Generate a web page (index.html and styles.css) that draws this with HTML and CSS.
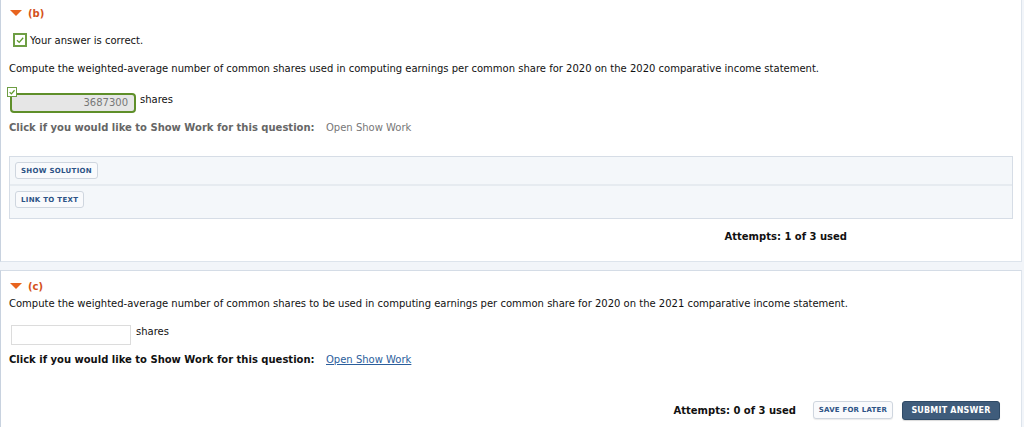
FILE: index.html
```html
<!DOCTYPE html>
<html>
<head>
<meta charset="utf-8">
<link rel="stylesheet" href="styles.css">
</head>
<body>
<div class="page">
  <section class="panel panel-b">
    <div class="part-head"><span class="tri"></span><span class="part-label">(b)</span></div>
    <div class="correct">
      <span class="chk"><svg width="10" height="10" viewBox="0 0 10 10"><path d="M2 5.2 L4.2 7.4 L8.2 2.8" fill="none" stroke="#5e9a2c" stroke-width="1.3"/></svg></span>
      <span>Your answer is correct.</span>
    </div>
    <p class="question">Compute the weighted-average number of common shares used in computing earnings per common share for 2020 on the 2020 comparative income statement.</p>
    <div class="answer-row done-row">
      <span class="input-wrap">
        <span class="input done">3687300</span>
        <span class="mini-chk"><svg width="8" height="8" viewBox="0 0 10 10"><path d="M2 5.2 L4.2 7.4 L8.2 2.8" fill="none" stroke="#5e9a2c" stroke-width="1.6"/></svg></span>
      </span>
      <span class="unit">shares</span>
    </div>
    <div class="showwork muted"><span class="sw-label">Click if you would like to Show Work for this question:</span><span class="sw-link">Open Show Work</span></div>
    <div class="solution">
      <div class="sol-row"><span class="btn">SHOW SOLUTION</span></div>
      <div class="sol-row"><span class="btn">LINK TO TEXT</span></div>
    </div>
    <div class="attempts-row first"><span class="attempts">Attempts: 1 of 3 used</span></div>
  </section>

  <section class="panel panel-c">
    <div class="part-head"><span class="tri"></span><span class="part-label">(c)</span></div>
    <p class="question q2">Compute the weighted-average number of common shares to be used in computing earnings per common share for 2020 on the 2021 comparative income statement.</p>
    <div class="answer-row empty-row">
      <span class="input empty"></span>
      <span class="unit">shares</span>
    </div>
    <div class="showwork active"><span class="sw-label">Click if you would like to Show Work for this question:</span><span class="sw-link link">Open Show Work</span></div>
    <div class="attempts-row second">
      <span class="attempts">Attempts: 0 of 3 used</span>
      <span class="btn save">SAVE FOR LATER</span>
      <span class="btn submit">SUBMIT ANSWER</span>
    </div>
  </section>
</div>
</body>
</html>
```
FILE: styles.css
```css
html, body {
  margin: 0;
  padding: 0;
}
body {
  background: #f2f5f9;
  font-family: "DejaVu Sans", Verdana, sans-serif;
  font-size: 10px;
  color: #111;
  width: 1024px;
  height: 427px;
  overflow: hidden;
}
.page {
  display: flex;
  flex-direction: column;
  gap: 8px;
}
.panel {
  background: #fff;
  border-left: 1px solid #c8d2df;
  border-right: 1px solid #dde4ec;
  box-sizing: content-box;
}
.panel-b {
  height: 261px;
  border-bottom: 1px solid #dde4ec;
  padding: 0 0 0 8px;
  width: 1012px;
  display: flex;
  flex-direction: column;
}
.panel-c {
  border-top: 1px solid #d4dce6;
  padding: 0 0 0 8px;
  width: 1012px;
  height: 160px;
  display: flex;
  flex-direction: column;
}
.part-head {
  display: flex;
  align-items: center;
  height: 12px;
  margin-top: 7px;
  padding-left: 1px;
}
.panel-c .part-head {
  margin-top: 9px;
}
.tri {
  width: 0;
  height: 0;
  border-left: 6px solid transparent;
  border-right: 6px solid transparent;
  border-top: 6px solid #e8641f;
  margin-right: 6px;
}
.part-label {
  color: #d4521a;
  font-weight: bold;
  font-size: 10px;
}
.correct {
  display: flex;
  align-items: center;
  margin-top: 14px;
  margin-left: 4px;
  height: 14px;
  gap: 3px;
}
.chk {
  width: 10px;
  height: 10px;
  border: 2px solid #6e9e44;
  display: flex;
  align-items: center;
  justify-content: center;
  background: #fff;
}
.question {
  margin: 16px 0 0 0;
  line-height: 12px;
}
.q2 {
  margin-top: 6px;
}
.answer-row {
  display: flex;
  align-items: center;
}
.done-row {
  margin-top: 12px;
  height: 28px;
  align-items: flex-start;
}
.input-wrap {
  position: relative;
  padding: 6px 0 0 6px;
  margin-left: -5px;
}
.input {
  display: block;
  box-sizing: border-box;
}
.input.done {
  width: 126px;
  height: 20px;
  border: 2px solid #5f8f2a;
  border-radius: 4px;
  background: #e6e6e6;
  color: #777;
  text-align: right;
  line-height: 16px;
  padding-right: 6px;
}
.mini-chk {
  position: absolute;
  left: 3px;
  top: 0;
  width: 10px;
  height: 10px;
  box-sizing: border-box;
  border: 1px solid #6e9e44;
  background: #fff;
  display: flex;
  align-items: center;
  justify-content: center;
}
.unit {
  margin-left: 4px;
}
.done-row .unit {
  margin-top: 7px;
}
.empty-row {
  margin-top: 15px;
  margin-left: 2px;
  align-items: flex-start;
}
.input.empty {
  width: 120px;
  height: 20px;
  border: 1px solid #dcdcdc;
  background: #fff;
}
.empty-row .unit {
  margin-left: 5px;
  margin-top: 1px;
}
.showwork {
  display: flex;
  margin-top: 7px;
  font-size: 10px;
}
.showwork.active {
  margin-top: 9px;
}
.sw-label {
  font-weight: bold;
  width: 317px;
}
.muted .sw-label {
  color: #666;
}
.muted .sw-link {
  color: #777;
}
.sw-link.link {
  color: #2b5e9c;
  text-decoration: underline;
}
.solution {
  margin-top: 23px;
  width: 1002px;
  border: 1px solid #d6dde6;
  background: #f4f7fa;
  display: flex;
  flex-direction: column;
}
.sol-row {
  height: 27px;
  padding: 5px 0 0 5px;
  box-sizing: border-box;
}
.sol-row + .sol-row {
  border-top: 2px solid #e6ebf0;
  height: 34px;
}
.btn {
  display: inline-flex;
  align-items: center;
  justify-content: center;
  box-sizing: border-box;
  height: 17px;
  padding: 0 5px;
  border: 1px solid #cfd6df;
  border-radius: 3px;
  background: #f9fafc;
  color: #2d5386;
  font-weight: bold;
  font-size: 7px;
  letter-spacing: 0.3px;
  white-space: nowrap;
}
.attempts-row {
  display: flex;
  justify-content: flex-end;
  align-items: center;
}
.attempts {
  font-weight: bold;
  font-size: 10px;
  color: #111;
}
.attempts-row.first {
  margin-top: 12px;
  padding-right: 174px;
}
.attempts-row.second {
  margin-top: 35px;
  padding-right: 21px;
  height: 20px;
}
.second .attempts {
  margin-right: 17px;
}
.btn.save {
  height: 18px;
  width: 80px;
  padding: 0;
  margin-right: 9px;
  letter-spacing: 0.2px;
  box-shadow: 0 1px 1px rgba(0,0,0,0.08);
}
.btn.submit {
  height: 19px;
  width: 98px;
  padding: 0;
  background: #3f5c7b;
  border-color: #2f4a66;
  color: #fff;
  font-size: 8px;
  letter-spacing: 0.2px;
  box-shadow: 0 1px 1px rgba(0,0,0,0.15);
}
```
